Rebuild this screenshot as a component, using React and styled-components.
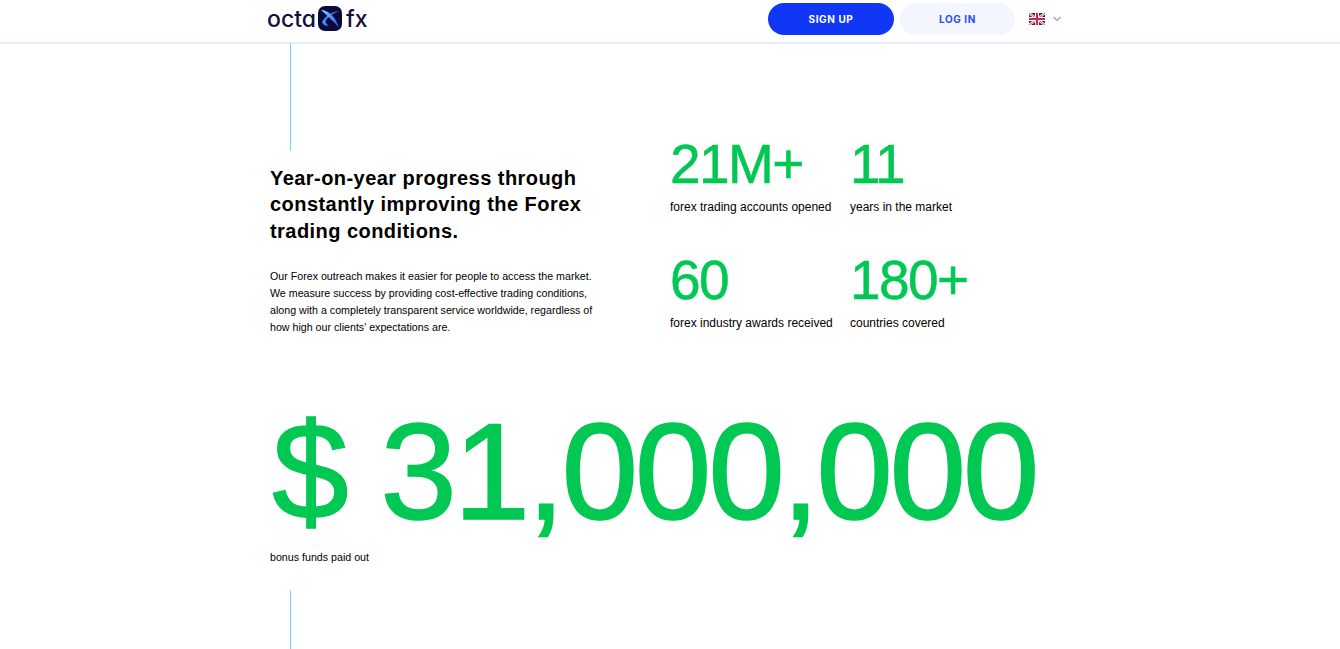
import React from "react";
import styled, { createGlobalStyle } from "styled-components";

const Global = createGlobalStyle`
  html, body { margin: 0; padding: 0; background: #fff; overflow: hidden; }
  body { font-family: "Liberation Sans", Arial, sans-serif; color: #000; }
`;
const Header = styled.header`
  height: 42px;
  border-bottom: 2px solid #e9ebfb;
  background: #fff;
  box-sizing: content-box;
  margin-bottom: -1px;
`;
const HeaderInner = styled.div`
  width: 800px;
  margin-left: 267px;
  height: 100%;
  display: flex;
  align-items: center;
`;
const Logo = styled.div`
  display: flex;
  align-items: center;
  color: #140f3f;
  font-family: "Inter", sans-serif;
  font-size: 23px;
  line-height: 30px;
  flex: 1;
  margin-top: -5px;
  font-feature-settings: "cv11";
`;
const LogoWord = styled.span`
  font-weight: 500;
`;
const Button = styled.button`
  width: ${(p) => p.$w}px;
  height: 32px;
  margin-right: ${(p) => p.$mr}px;
  border: 0;
  border-radius: 16px;
  background: ${(p) => (p.$primary ? "#0f37f5" : "#f3f6ff")};
  color: ${(p) => (p.$primary ? "#fff" : "#2f4bf0")};
  font-family: "Inter", sans-serif;
  font-size: 10px;
  font-weight: 700;
  letter-spacing: 0.6px;
  padding: 0;
  margin-top: -5px;
`;
const Lang = styled.div`
  display: flex;
  align-items: center;
  gap: 7px;
  margin-top: -4px;
  width: 38px;
`;
const Page = styled.main`
  width: 800px;
  margin-left: 270px;
  position: relative;
  height: 606px;
`;
const Rule = styled.div`
  position: absolute;
  left: 20px;
  width: 1px;
  background: #74d6ff;
  top: ${(p) => p.$top}px;
  height: ${(p) => p.$h}px;
`;
const Top = styled.section`
  display: flex;
  align-items: flex-start;
  padding-top: 89px;
`;
const Intro = styled.div`
  width: 400px;
  padding-top: 33px;
`;
const Title = styled.h2`
  margin: 0 0 24px;
  max-width: 340px;
  font-size: 20px;
  line-height: 26.4px;
  font-weight: 700;
  letter-spacing: 0.45px;
`;
const Body = styled.p`
  margin: 0;
  font-size: 10.67px;
  line-height: 17px;
`;
const Stats = styled.div`
  display: grid;
  grid-template-columns: 180px 1fr;
  row-gap: 33px;
`;
const Stat = styled.div``;
const Num = styled.div`
  font-size: 55px;
  line-height: 64px;
  letter-spacing: -1.6px;
  -webkit-text-stroke: 0.5px #00c853;
  color: #00c853;
`;
const Label = styled.div`
  font-size: 12px;
  line-height: 16px;
  margin-top: 3px;
`;
const Big = styled.div`
  font-size: 138px;
  line-height: 150px;
  letter-spacing: -3.47px;
  -webkit-text-stroke: 1.5px #00c853;
  color: #00c853;
  margin-top: 60px;
  padding-left: 2px;
  white-space: nowrap;
`;
const BigLabel = styled.div`
  font-size: 10.67px;
  line-height: 14px;
  margin-top: 4px;
`;

const Flag = () => (
  <svg width="16" height="12" viewBox="0 0 16 12">
    <rect width="16" height="12" fill="#1a2a7a" />
    <path d="M0 0L16 12M16 0L0 12" stroke="#fff" strokeWidth="2.4" />
    <path d="M0 0L16 12M16 0L0 12" stroke="#d3273e" strokeWidth="0.8" />
    <path d="M8 0V12M0 6H16" stroke="#fff" strokeWidth="4" />
    <path d="M8 0V12M0 6H16" stroke="#d3273e" strokeWidth="2.2" />
  </svg>
);
const Chevron = () => (
  <svg width="10" height="6" viewBox="0 0 10 6" fill="none">
    <path d="M1.5 1L5 4.5L8.5 1" stroke="#9aa0ad" strokeWidth="1.2" />
  </svg>
);
const MarkSvg = styled.svg`
  margin: 0 4px 0 2px;
  flex: none;
`;
const Mark = () => (
  <MarkSvg width="24" height="25" viewBox="0 0 24 25">
    <defs>
      <linearGradient id="g" x1="0" y1="0" x2="1" y2="1">
        <stop offset="0" stopColor="#8ad4ff" />
        <stop offset="1" stopColor="#1f4bf0" />
      </linearGradient>
    </defs>
    <rect width="24" height="25" rx="7" fill="#0b0a3a" />
    <path d="M21 5C14 6 7 10 4 16C5 19 8 20 11 20C8 18 7 16 8 14C11 10 16 7 21 5Z" fill="#3f8cf7" />
    <path d="M3 4C10 4 18 11 21 22C16 15 9 10 3 4Z" fill="url(#g)" />
  </MarkSvg>
);

export default function App() {
  return (
    <>
      <Global />
      <Header>
        <HeaderInner>
          <Logo>
            <LogoWord>octa</LogoWord>
            <Mark />
            <LogoWord>fx</LogoWord>
          </Logo>
          <Button $primary $w={126} $mr={6}>SIGN UP</Button>
          <Button $w={115} $mr={14}>LOG IN</Button>
          <Lang>
            <Flag />
            <Chevron />
          </Lang>
        </HeaderInner>
      </Header>
      <Page>
        <Rule $top={0} $h={108} />
        <Rule $top={547} $h={60} />
        <Top>
          <Intro>
            <Title>Year-on-year progress through constantly improving the Forex trading conditions.</Title>
            <Body>
              Our Forex outreach makes it easier for people to access the market.<br />
              We measure success by providing cost-effective trading conditions,<br />
              along with a completely transparent service worldwide, regardless of<br />
              how high our clients' expectations are.
            </Body>
          </Intro>
          <Stats>
            <Stat><Num>21M+</Num><Label>forex trading accounts opened</Label></Stat>
            <Stat><Num>11</Num><Label>years in the market</Label></Stat>
            <Stat><Num>60</Num><Label>forex industry awards received</Label></Stat>
            <Stat><Num>180+</Num><Label>countries covered</Label></Stat>
          </Stats>
        </Top>
        <Big>$ 31,000,000</Big>
        <BigLabel>bonus funds paid out</BigLabel>
      </Page>
    </>
  );
}
